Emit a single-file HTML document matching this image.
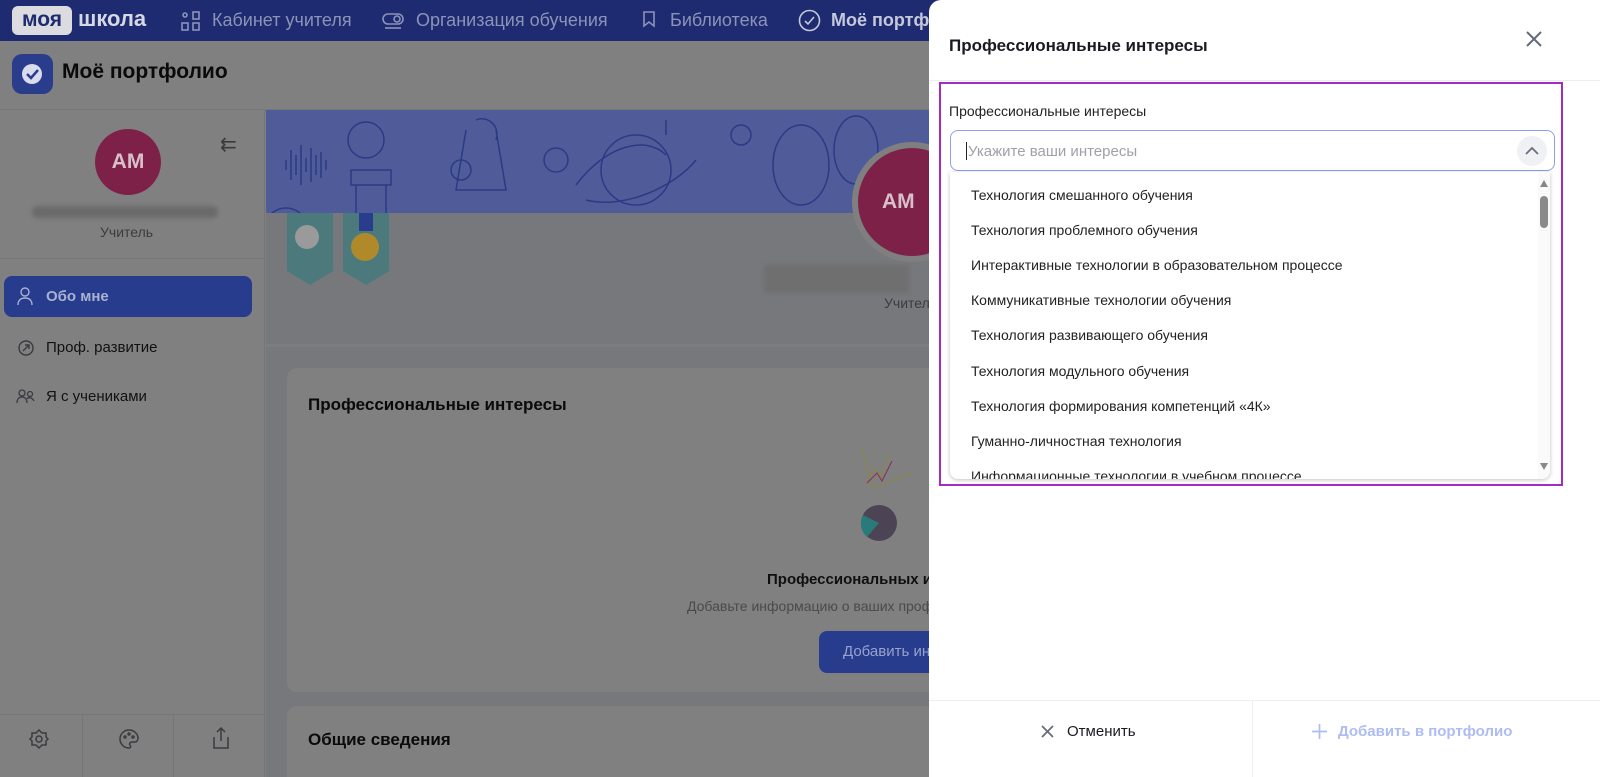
<!DOCTYPE html>
<html><head><meta charset="utf-8"><style>
*{box-sizing:border-box;margin:0;padding:0}
html,body{width:1600px;height:777px;overflow:hidden}
body{position:relative;font-family:"Liberation Sans",sans-serif;background:#808080;color:#0f0f14}
.abs{position:absolute;white-space:nowrap}
.top{left:0;top:0;width:1600px;height:41px;background:#1e2b70;color:#8c93b8;font-size:18px}
.top span{position:absolute;top:10px}
.side{left:0;top:110px;width:265px;height:667px;background:#808080;border-right:1px solid #767676}
.main{left:266px;top:110px;width:700px;height:667px;background:#77787c}
.card{background:#808080;border-radius:10px}
.modal{left:929px;top:0;width:671px;height:777px;background:#fff;border-top-left-radius:12px}
.item{position:absolute;left:21px;font-size:14px;color:#222;white-space:nowrap}
</style></head><body>
<div class="abs top">
 <div class="abs" style="left:12px;top:6px;width:60px;height:29px;background:#dcdce0;border-radius:6px;color:#1e2b70;font-weight:bold;font-size:21px;text-align:center;line-height:28px">моя</div>
 <span style="left:78px;top:6px;font-size:22px;font-weight:bold;color:#d6d8e4">школа</span>
 <svg class="abs" style="left:180px;top:10px" width="22" height="22" fill="none" stroke="#8c93b8" stroke-width="1.6"><circle cx="5" cy="5" r="2"/><rect x="13" y="2" width="6" height="7"/><rect x="2" y="13" width="6" height="7"/><rect x="13" y="13" width="6" height="7"/></svg>
 <span style="left:212px">Кабинет учителя</span>
 <svg class="abs" style="left:382px;top:12px" width="22" height="18" fill="none" stroke="#8c93b8" stroke-width="1.6"><rect x="1" y="2" width="20" height="10" rx="5"/><circle cx="15" cy="7" r="3"/><path d="M3 16h16"/></svg>
 <span style="left:416px">Организация обучения</span>
 <svg class="abs" style="left:642px;top:10px" width="14" height="22" fill="none" stroke="#8c93b8" stroke-width="1.6"><path d="M2 2h10v14l-5-4-5 4z"/></svg>
 <span style="left:670px">Библиотека</span>
 <svg class="abs" style="left:798px;top:9px" width="23" height="23" fill="none" stroke="#c5c8da" stroke-width="1.6"><circle cx="11.5" cy="11.5" r="10"/><path d="M7 12l3 3 6-7"/></svg>
 <span style="left:831px;font-weight:bold;color:#c5c8da">Моё портфолио</span>
</div>
<div class="abs" style="left:0;top:41px;width:930px;height:69px;background:#808080;border-bottom:1px solid #767676">
 <div class="abs" style="left:12px;top:13px;width:41px;height:40px;border-radius:10px;background:#2a3d8c"><svg width="41" height="40"><circle cx="20" cy="20" r="10" fill="#d8dcec"/><path d="M15 20l4 4 7-8" stroke="#2a3d8c" stroke-width="2.5" fill="none"/></svg></div>
 <div class="abs" style="left:62px;top:19px;font-size:21px;font-weight:bold;color:#0a0a0a">Моё портфолио</div>
</div>
<div class="abs side">
 <div class="abs" style="left:95px;top:19px;width:66px;height:66px;border-radius:50%;background:#7d2148;color:#d8c0cb;font-weight:bold;font-size:21px;text-align:center;line-height:66px">AM</div>
 <div class="abs" style="left:220px;top:22px;color:#3a3a40;font-size:20px">⇇</div>
 <div class="abs" style="left:32px;top:96px;width:186px;height:12px;border-radius:6px;background:#6a6a6a;filter:blur(2px)"></div>
 <div class="abs" style="left:100px;top:114px;font-size:14px;color:#3c3c3c">Учитель</div>
 <div class="abs" style="left:0;top:148px;width:265px;height:1px;background:#767676"></div>
 <div class="abs" style="left:4px;top:166px;width:248px;height:41px;border-radius:8px;background:#283c8e;color:#a9b1d2;font-weight:bold;font-size:15px;padding:12px 0 0 42px">Обо мне</div>
 <svg class="abs" style="left:16px;top:176px" width="18" height="20" fill="none" stroke="#a9b1d2" stroke-width="1.4"><circle cx="9" cy="6" r="4"/><path d="M2 19c0-5 3-7 7-7s7 2 7 7"/></svg>
 <svg class="abs" style="left:17px;top:229px" width="18" height="18" fill="none" stroke="#3a3a40" stroke-width="1.4"><circle cx="9" cy="9" r="7"/><path d="M6 12l6-6M8 6h4v4"/></svg>
 <div class="abs" style="left:46px;top:229px;font-size:15px;color:#111">Проф. развитие</div>
 <svg class="abs" style="left:16px;top:278px" width="20" height="18" fill="none" stroke="#3a3a40" stroke-width="1.3"><circle cx="6" cy="5" r="3"/><circle cx="14" cy="6" r="2.5"/><path d="M1 15c0-4 2-6 5-6s5 2 5 6M11 11c1-2 5-2 7 2"/></svg>
 <div class="abs" style="left:46px;top:278px;font-size:15px;color:#111">Я с учениками</div>
 <div class="abs" style="left:0;top:604px;width:265px;height:1px;background:#767676"></div>
 <div class="abs" style="left:82px;top:605px;width:1px;height:62px;background:#767676"></div>
 <div class="abs" style="left:173px;top:605px;width:1px;height:62px;background:#767676"></div>
 <svg class="abs" style="left:28px;top:618px" width="22" height="22" fill="none" stroke="#3a3a40" stroke-width="1.5"><path d="M11 2l3 3h4v4l2 2-2 2v4h-4l-3 3-3-3H4v-4l-2-2 2-2V5h4z"/><circle cx="11" cy="11" r="3"/></svg>
 <svg class="abs" style="left:118px;top:618px" width="22" height="22" fill="none" stroke="#3a3a40" stroke-width="1.5"><path d="M11 2a9 9 0 100 18c2 0 2-2 1-3s0-3 2-3h3c2 0 3-2 3-4 0-4-4-8-9-8z"/><circle cx="7" cy="9" r="1"/><circle cx="11" cy="6" r="1"/><circle cx="15" cy="9" r="1"/></svg>
 <svg class="abs" style="left:210px;top:616px" width="22" height="24" fill="none" stroke="#3a3a40" stroke-width="1.5"><path d="M11 2v13M7 6l4-4 4 4M4 11v11h14V11"/></svg>
</div>
<div class="abs main">
 <div class="abs" style="left:0;top:0;width:700px;height:103px;background:#505c99;overflow:hidden">
  <svg width="700" height="103" fill="none" stroke="#2b3a86" stroke-width="1.5">
   <path d="M20 50v10M25 40v30M30 45v20M35 35v40M40 48v14M45 38v34M50 45v20M55 42v26M60 50v10"/>
   <circle cx="100" cy="30" r="18"/><path d="M85 60h40v15h-40zM90 75v28M120 75v28"/>
   <circle cx="195" cy="60" r="10"/><path d="M200 20l-10 60h50l-10-60M210 10c10-5 25 5 20 20"/>
   <circle cx="290" cy="50" r="12"/><path d="M310 75c30-40 70-50 90-30M400 10v15"/><circle cx="370" cy="60" r="35"/><path d="M320 90c40 10 90-15 110-40"/>
   <circle cx="475" cy="25" r="10"/><ellipse cx="535" cy="55" rx="28" ry="40"/><ellipse cx="590" cy="40" rx="22" ry="34"/>
   <circle cx="20" cy="120" r="22"/>
  </svg>
 </div>
 <div class="abs" style="left:586px;top:32px;width:120px;height:120px;border-radius:50%;background:#7d2148;border:6px solid #7f7f7f;color:#d8c0cb;font-weight:bold;font-size:21px;line-height:108px;padding-left:24px">AM</div>
 <svg class="abs" style="left:21px;top:103px" width="110" height="72"><path d="M0 0h46v58l-23 14L0 58z" fill="#4c7a7c"/><circle cx="20" cy="24" r="12" fill="#9a9a9a"/><path d="M56 0h46v58l-23 14-23-14z" fill="#4c7a7c"/><path d="M72 0h14v18h-14z" fill="#2a3d8c"/><circle cx="78" cy="34" r="14" fill="#b08a2a"/></svg>
 <div class="abs" style="left:498px;top:155px;width:145px;height:28px;background:#6f6f6f;filter:blur(2px)"></div>
 <div class="abs" style="left:618px;top:185px;font-size:14px;color:#3c3c3c">Учитель</div>
 <div class="abs" style="left:0;top:234px;width:700px;height:3px;background:#7c7d81"></div>
 <div class="abs card" style="left:21px;top:258px;width:700px;height:324px">
  <div class="abs" style="left:21px;top:27px;font-size:17px;font-weight:bold;color:#0a0a0a">Профессиональные интересы</div>
  <svg class="abs" style="left:545px;top:75px" width="100" height="110"><path d="M30 5l10 40 40-15M35 40l8-15 6 10 8-25" stroke="#884" fill="none"/><path d="M35 40l10-10 5 8 10-20" stroke="#8a2a5a" fill="none"/><circle cx="47" cy="80" r="18" fill="#4c4455"/><path d="M47 80l-16-8a18 18 0 0 0 4 22z" fill="#2a7a7a"/></svg>
  <div class="abs" style="left:480px;top:203px;font-size:15px;font-weight:bold;color:#0f0f0f">Профессиональных интересов нет</div>
  <div class="abs" style="left:400px;top:230px;font-size:14px;color:#4a4a4a">Добавьте информацию о ваших профессиональных интересах</div>
  <div class="abs" style="left:532px;top:263px;width:200px;height:42px;border-radius:8px;background:#283c8e;color:#98a2cc;font-size:15px;padding:12px 0 0 24px">Добавить интересы</div>
 </div>
 <div class="abs card" style="left:21px;top:596px;width:700px;height:100px">
  <div class="abs" style="left:21px;top:24px;font-size:17px;font-weight:bold;color:#0a0a0a">Общие сведения</div>
 </div>
</div>
<div class="abs modal">
 <div class="abs" style="left:20px;top:36px;font-size:17px;font-weight:bold;color:#1a1a22">Профессиональные интересы</div>
 <svg class="abs" style="left:596px;top:30px" width="18" height="18" stroke="#666a78" stroke-width="2"><path d="M2 2l14 14M16 2L2 16"/></svg>
 <div class="abs" style="left:0;top:80px;width:671px;height:1px;background:#eceef2"></div>
 <div class="abs" style="left:10px;top:82px;width:624px;height:404px;border:2px solid #a32cc4"></div>
 <div class="abs" style="left:20px;top:103px;font-size:14px;color:#222">Профессиональные интересы</div>
 <div class="abs" style="left:21px;top:130px;width:605px;height:41px;border:1px solid #8d9ef0;border-radius:8px">
  <div class="abs" style="left:15px;top:11px;width:1px;height:18px;background:#222"></div>
  <div class="abs" style="left:17px;top:12px;font-size:15px;color:#a0a0a8">Укажите ваши интересы</div>
  <div class="abs" style="left:566px;top:5px;width:30px;height:30px;border-radius:50%;background:#f0f1f4"><svg width="30" height="30" fill="none" stroke="#6a6e7c" stroke-width="1.8"><path d="M9 18l6-6 6 6"/></svg></div>
 </div>
 <div class="abs" style="left:21px;top:172px;width:600px;height:307px;border-radius:0 0 8px 8px;box-shadow:0 1px 4px rgba(0,0,0,.25);overflow:hidden;background:#fff">
  <div class="item" style="top:15px">Технология смешанного обучения</div>
  <div class="item" style="top:50px">Технология проблемного обучения</div>
  <div class="item" style="top:85px">Интерактивные технологии в образовательном процессе</div>
  <div class="item" style="top:120px">Коммуникативные технологии обучения</div>
  <div class="item" style="top:155px">Технология развивающего обучения</div>
  <div class="item" style="top:191px">Технология модульного обучения</div>
  <div class="item" style="top:226px">Технология формирования компетенций «4К»</div>
  <div class="item" style="top:261px">Гуманно-личностная технология</div>
  <div class="item" style="top:296px">Информационные технологии в учебном процессе</div>
  <div class="abs" style="left:588px;top:0;width:12px;height:307px;background:#fafafa"></div>
  <div class="abs" style="left:590px;top:8px;width:0;height:0;border-left:4px solid transparent;border-right:4px solid transparent;border-bottom:7px solid #888"></div>
  <div class="abs" style="left:590px;top:24px;width:8px;height:32px;border-radius:4px;background:#8a8a8a"></div>
  <div class="abs" style="left:590px;top:291px;width:0;height:0;border-left:4px solid transparent;border-right:4px solid transparent;border-top:7px solid #888"></div>
 </div>
 <div class="abs" style="left:0;top:700px;width:671px;height:1px;background:#eceef2"></div>
 <div class="abs" style="left:323px;top:701px;width:1px;height:76px;background:#eceef2"></div>
 <svg class="abs" style="left:112px;top:725px" width="13" height="13" stroke="#666a78" stroke-width="1.7"><path d="M1 1l11 11M12 1L1 12"/></svg>
 <div class="abs" style="left:138px;top:723px;font-size:15px;color:#1a1a22">Отменить</div>
 <svg class="abs" style="left:383px;top:724px" width="15" height="15" stroke="#aebcf5" stroke-width="1.7"><path d="M7.5 0v15M0 7.5h15"/></svg>
 <div class="abs" style="left:409px;top:723px;font-size:15px;font-weight:bold;color:#aebcf5">Добавить в портфолио</div>
</div>
</body></html>
